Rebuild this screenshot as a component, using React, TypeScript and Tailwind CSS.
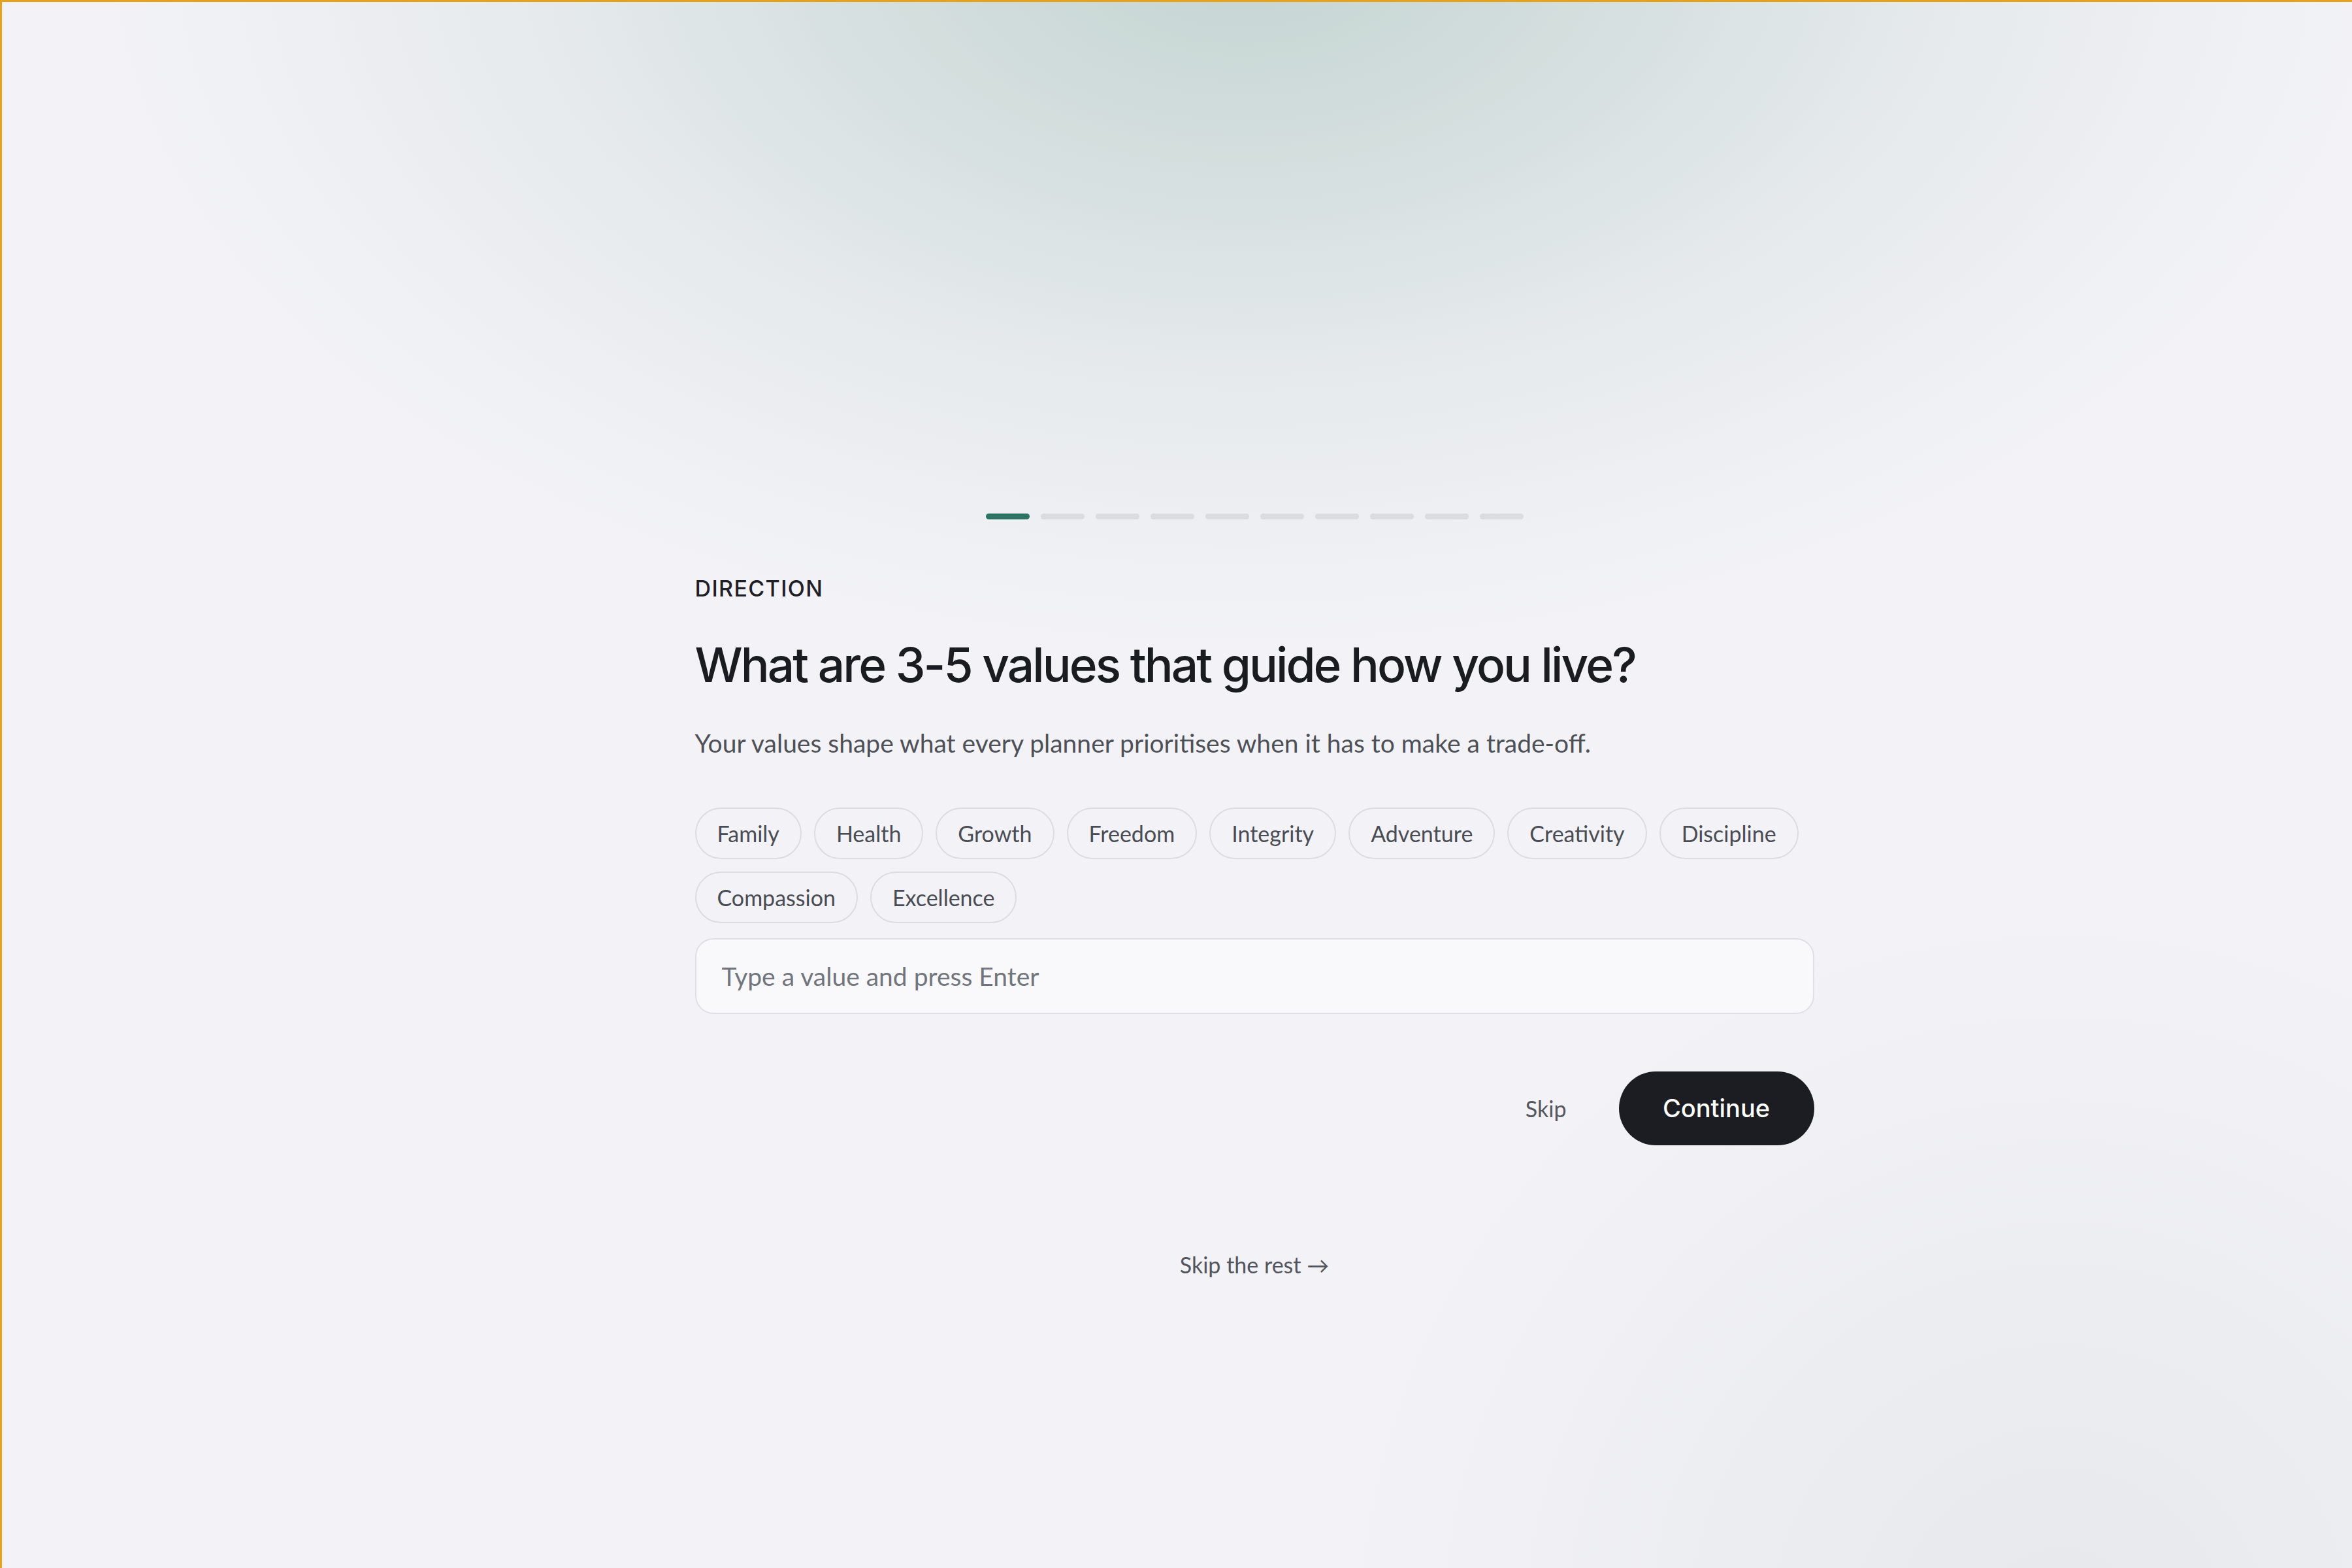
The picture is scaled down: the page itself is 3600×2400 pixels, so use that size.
import { useState } from "react";

const values = [
  "Family",
  "Health",
  "Growth",
  "Freedom",
  "Integrity",
  "Adventure",
  "Creativity",
  "Discipline",
  "Compassion",
  "Excellence",
];

const totalSteps = 10;
const currentStep = 0;

export default function App() {
  const [draft, setDraft] = useState("");

  return (
    <div className="relative h-[2400px] w-full overflow-hidden border-t-[3px] border-l-[3px] border-[#e8a21a] bg-[#f3f3f7] bg-[image:radial-gradient(ellipse_1750px_1080px_at_1900px_-90px,#c3d4d1_0%,#d3dedd_30%,#e6eaec_62%,rgba(243,243,247,0)_100%),radial-gradient(circle_1100px_at_3150px_2500px,#e7e8ec_0%,rgba(243,243,247,0)_100%)] font-['Lato','Noto_Sans',sans-serif]">
      <div className="flex flex-col items-center pl-[237px] pt-[783px]">
        {/* Step progress */}
        <div className="flex gap-[17px]">
          {Array.from({ length: totalSteps }).map((_, i) => (
            <div
              key={i}
              className={`h-[9px] w-[67px] rounded-full ${
                i === currentStep ? "bg-[#2e7465]" : "bg-[#dadce0]"
              }`}
            />
          ))}
        </div>

        <div className="mt-[85px] w-[1713px]">
          <p className="font-['Inter',sans-serif] text-[34px] leading-[41px] font-medium tracking-[0.04em] text-[#1f2025]">
            DIRECTION
          </p>
          <h1 className="mt-[53px] font-['Inter',sans-serif] text-[73px] leading-[88px] font-medium tracking-[-0.04em] text-[#1b1c21]">
            What are 3-5 values that guide how you live?
          </h1>
          <p className="mt-[52px] text-[39px] leading-[47px] text-[#4e5058]">
            Your values shape what every planner prioritises when it has to make a trade-off.
          </p>

          {/* Suggested values */}
          <div className="mt-[75px] flex flex-wrap gap-[19px]">
            {values.map((v) => (
              <button
                key={v}
                className="flex h-[79px] items-center rounded-full border-2 border-[#dcdce1] px-[32px] text-[34px] text-[#4a4c55]"
              >
                {v}
              </button>
            ))}
          </div>

          <input
            value={draft}
            onChange={(e) => setDraft(e.target.value)}
            placeholder="Type a value and press Enter"
            className="mt-[23px] block h-[116px] w-full rounded-[28px] border-2 border-[#dfdfe4] bg-[#f9f9fb] px-[39px] text-[39px] text-[#1b1c21] outline-none placeholder:text-[#72757d]"
          />

          <div className="mt-[88px] flex items-center justify-end gap-[80px]">
            <button className="text-[34px] text-[#55575e]">Skip</button>
            <button className="flex h-[113px] w-[299px] items-center justify-center rounded-full bg-[#1c1d22] font-['Inter',sans-serif] text-[38px] font-medium text-white">
              Continue
            </button>
          </div>
        </div>

        <button className="mt-[162px] text-[34px] leading-[41px] text-[#52555d]">
          Skip the rest →
        </button>
      </div>
    </div>
  );
}
